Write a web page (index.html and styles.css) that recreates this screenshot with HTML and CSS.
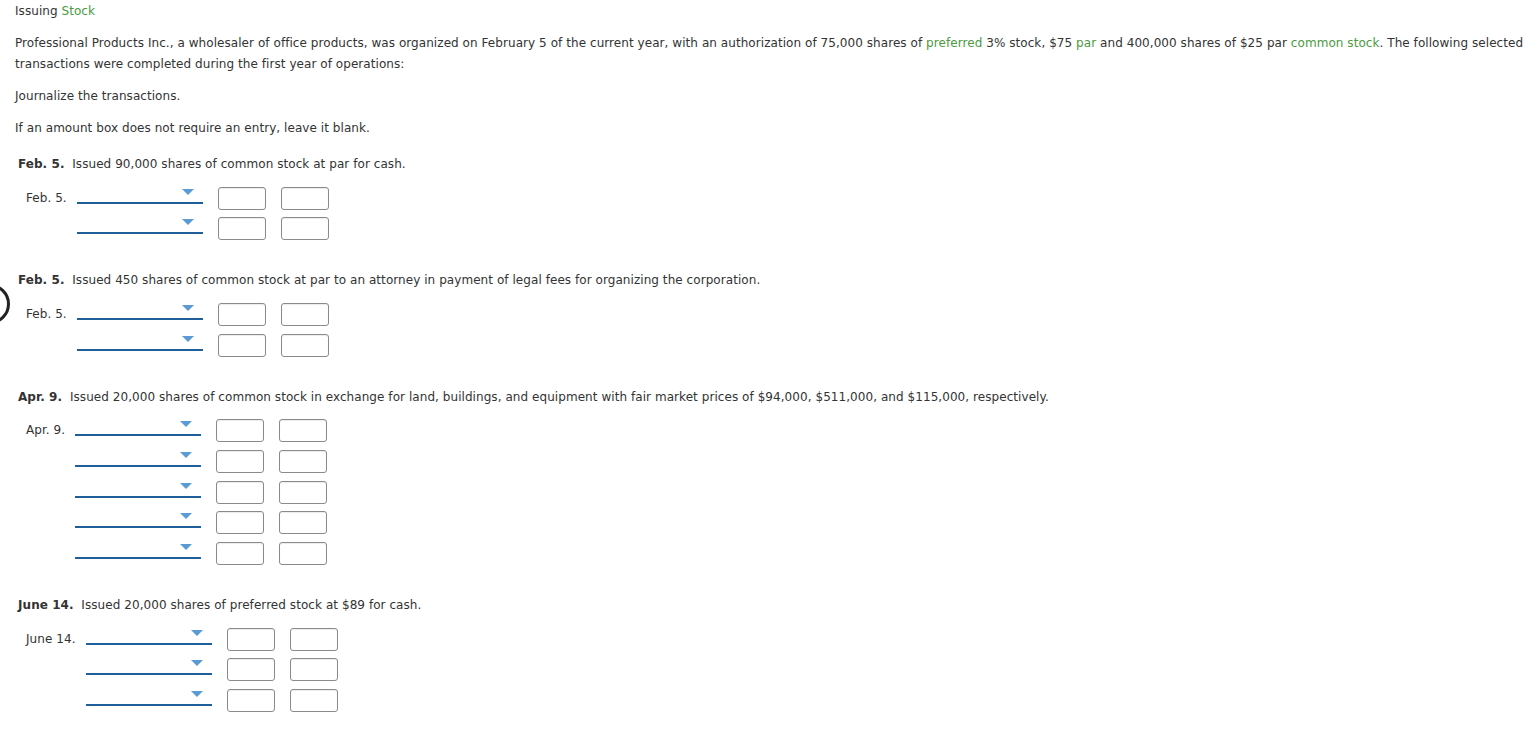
FILE: index.html
```html
<!DOCTYPE html>
<html>
<head>
<meta charset="utf-8">
<link rel="stylesheet" href="styles.css">
</head>
<body>
<div class="page">
  <p class="title">Issuing <span class="term">Stock</span></p>
  <p class="para">Professional Products Inc., a wholesaler of office products, was organized on February 5 of the current year, with an authorization of 75,000 shares of <span class="term">preferred</span> 3% stock, $75 <span class="term">par</span> and 400,000 shares of $25 par <span class="term">common stock</span>. The following selected transactions were completed during the first year of operations:</p>
  <p class="para">Journalize the transactions.</p>
  <p class="para last">If an amount box does not require an entry, leave it blank.</p>

  <section class="entry">
    <p class="heading"><b>Feb. 5.</b>&nbsp; Issued 90,000 shares of common stock at par for cash.</p>
    <div class="journal">
      <span class="date">Feb. 5.</span><span class="select"><i class="caret"></i></span><span class="box"></span><span class="box"></span>
      <span></span><span class="select"><i class="caret"></i></span><span class="box"></span><span class="box"></span>
    </div>
  </section>

  <section class="entry">
    <p class="heading"><b>Feb. 5.</b>&nbsp; Issued 450 shares of common stock at par to an attorney in payment of legal fees for organizing the corporation.</p>
    <div class="journal">
      <span class="date">Feb. 5.</span><span class="select"><i class="caret"></i></span><span class="box"></span><span class="box"></span>
      <span></span><span class="select"><i class="caret"></i></span><span class="box"></span><span class="box"></span>
    </div>
  </section>

  <section class="entry">
    <p class="heading"><b>Apr. 9.</b>&nbsp; Issued 20,000 shares of common stock in exchange for land, buildings, and equipment with fair market prices of $94,000, $511,000, and $115,000, respectively.</p>
    <div class="journal">
      <span class="date">Apr. 9.</span><span class="select"><i class="caret"></i></span><span class="box"></span><span class="box"></span>
      <span></span><span class="select"><i class="caret"></i></span><span class="box"></span><span class="box"></span>
      <span></span><span class="select"><i class="caret"></i></span><span class="box"></span><span class="box"></span>
      <span></span><span class="select"><i class="caret"></i></span><span class="box"></span><span class="box"></span>
      <span></span><span class="select"><i class="caret"></i></span><span class="box"></span><span class="box"></span>
    </div>
  </section>

  <section class="entry">
    <p class="heading"><b>June 14.</b>&nbsp; Issued 20,000 shares of preferred stock at $89 for cash.</p>
    <div class="journal">
      <span class="date">June 14.</span><span class="select"><i class="caret"></i></span><span class="box"></span><span class="box"></span>
      <span></span><span class="select"><i class="caret"></i></span><span class="box"></span><span class="box"></span>
      <span></span><span class="select"><i class="caret"></i></span><span class="box"></span><span class="box"></span>
    </div>
  </section>
</div>
<div class="edge-circle"></div>
</body>
</html>
```

FILE: styles.css
```css
html, body {
  margin: 0;
  padding: 0;
  background: #ffffff;
}
body {
  font-family: "DejaVu Sans", Verdana, sans-serif;
  font-size: 12px;
  letter-spacing: 0.06px;
  color: #333333;
}
.page {
  padding: 1px 0 0 15px;
}
p {
  margin: 0;
  line-height: 21px;
}
.title {
  margin-bottom: 11px;
}
.para {
  margin-bottom: 11px;
}
.para.last {
  margin-bottom: 15px;
}
.term {
  color: #4b9a43;
}
.entry {
  margin-bottom: 30px;
}
.heading {
  padding-left: 3px;
}
.heading b {
  font-weight: bold;
}
.journal {
  display: grid;
  grid-template-columns: auto 126px 48px 48px;
  column-gap: 15px;
  row-gap: 7.75px;
  align-items: end;
  padding-left: 11px;
  margin-top: 11.5px;
  width: max-content;
}
.journal > span:nth-child(4n+1) {
  margin-right: -5px;
}
.date {
  align-self: center;
  line-height: 23px;
}
.select {
  position: relative;
  height: 17px;
  border-bottom: 2px solid #1f5f99;
  box-sizing: border-box;
  margin-bottom: 6px;
}
.caret {
  position: absolute;
  right: 9px;
  top: 2px;
  width: 0;
  height: 0;
  border-left: 6px solid transparent;
  border-right: 6px solid transparent;
  border-top: 6px solid #5a9bd3;
}
.box {
  height: 23px;
  border: 1px solid #8a8a8a;
  border-radius: 3px;
  box-sizing: border-box;
  box-shadow: inset 0 1px 1px rgba(0,0,0,0.08);
  background: #ffffff;
}
.edge-circle {
  position: absolute;
  left: -30px;
  top: 284px;
  width: 34px;
  height: 34px;
  border: 3px solid #222222;
  border-radius: 50%;
}
```
